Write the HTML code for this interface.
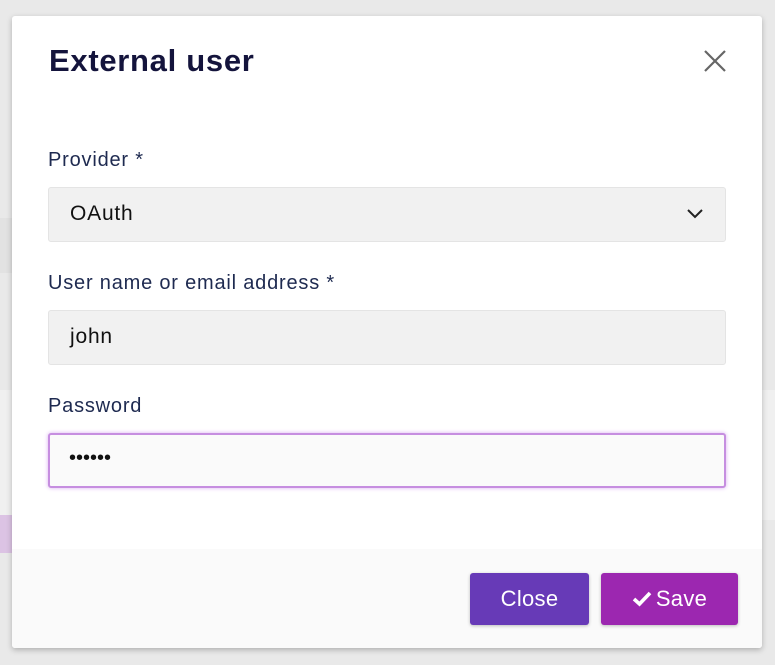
<!DOCTYPE html>
<html><head><meta charset="utf-8"><style>
*{box-sizing:border-box;margin:0;padding:0}
body{width:775px;height:665px;background:#e9e9e9;font-family:"Liberation Sans",sans-serif;position:relative;overflow:hidden}
.bg1{position:absolute;left:0;top:218px;width:12px;height:55px;background:#e2e2e2}
.bg2{position:absolute;left:0;top:390px;width:775px;height:130px;background:#f0f0f0}
.bg3{position:absolute;left:0;top:515px;width:12px;height:38px;background:#dcc3e4}
.modal{position:absolute;left:12px;top:16px;width:750px;height:632px;background:#fff;border-radius:3px;box-shadow:0 2px 6px rgba(0,0,0,.25);overflow:hidden}
h1{position:absolute;left:37px;top:27px;font-size:31px;font-weight:bold;color:#14143c;letter-spacing:0.7px}
.x{position:absolute;left:692px;top:34px}
label{position:absolute;left:36px;font-size:20px;color:#1e2a50;letter-spacing:0.8px}
.f{position:absolute;left:36px;width:678px;height:55px;background:#f1f1f1;border:1px solid #e4e4e4;border-radius:3px;font-size:21px;color:#111;padding:14px 0 0 21px;letter-spacing:0.8px}
.f.a{background:#fafafa;border:2px solid #c68ee0;box-shadow:0 0 4px #d9aef0;padding:12px 0 0 19px;letter-spacing:0;font-size:20px}
.foot{position:absolute;left:0;top:533px;width:750px;height:99px;background:#fafafa}
.btn{position:absolute;top:557px;height:52px;border-radius:3px;color:#fff;font-size:22px;text-align:center;line-height:52px;box-shadow:0 1px 3px rgba(0,0,0,.25);letter-spacing:0.3px}
</style></head><body>
<div class="bg1"></div><div class="bg2"></div><div class="bg3"></div>
<div class="modal">
<h1>External user</h1>
<svg class="x" width="22" height="22" viewBox="0 0 22 22"><path d="M1 1L21 21M21 1L1 21" stroke="#666" stroke-width="2.2"/></svg>
<label style="top:133px">Provider *</label>
<div class="f" style="top:171px">OAuth<svg style="position:absolute;right:22px;top:21px" width="16" height="10" viewBox="0 0 16 10"><path d="M1 1L8 8L15 1" fill="none" stroke="#222" stroke-width="2"/></svg></div>
<label style="top:256px">User name or email address *</label>
<div class="f" style="top:294px">john</div>
<label style="top:379px">Password</label>
<div class="f a" style="top:417px">••••••</div>
<div class="foot"></div>
<div class="btn" style="left:458px;width:119px;background:#673ab7">Close</div>
<div class="btn" style="left:589px;width:137px;background:#9c27b0"><svg width="20" height="16" viewBox="0 0 20 16" style="vertical-align:-1px;margin-right:4px"><path d="M2 8L7.5 13L18 2" fill="none" stroke="#fff" stroke-width="3.6"/></svg>Save</div>
</div>
</body></html>
